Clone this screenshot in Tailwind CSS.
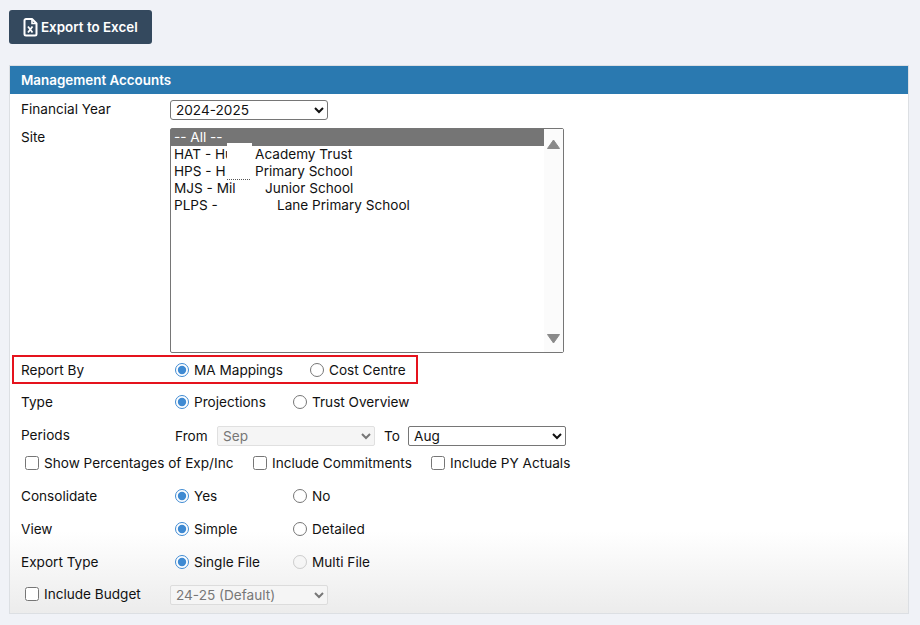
<!DOCTYPE html>
<html lang="en">
<head>
<meta charset="utf-8">
<script src="https://cdn.jsdelivr.net/npm/@tailwindcss/browser@4"></script>
<title>Management Accounts</title>
</head>
<body class="bg-[#f0f2f7] font-['Inter','Liberation_Sans',sans-serif] text-[13.6px] text-[#111] h-[625px] overflow-hidden">
<div class="pt-[10px] pl-[9px] pr-[11px]">
  <button class="h-[34px] w-[143px] rounded-[3px] bg-[#34495e] text-white font-semibold text-[13.4px] flex items-center pl-[14px] gap-[3px]">
    <svg width="15" height="19" viewBox="0 0 15 19" fill="none" stroke="#fff" stroke-width="2"><path d="M1.500 2.500a1.500 1.500 0 0 1 1.500-1.500h6l4.500 4.500v10.500a1.500 1.500 0 0 1-1.500 1.500h-9a1.500 1.500 0 0 1-1.500-1.500z" stroke-linejoin="round"/><path d="M9 1v4.500h4.500" stroke-width="1.600"/><path d="M5 8.500l4.500 6M9.500 8.500l-4.500 6" stroke-width="1.800"/></svg>
    <span class="pt-px">Export to Excel</span>
  </button>
  <div class="mt-[21px] border border-[#dcdfe3] bg-gradient-to-b from-white from-[85%] to-[#ececec]">
    <div class="h-[28px] bg-[#2a79b0] text-white font-semibold text-[13.4px] flex items-center pl-[11px]">Management Accounts</div>
    <div class="pl-[10px] pb-[3px]">
      <div class="flex items-center h-[31px]"><span class="w-[150px] pl-px -mt-[1px]">Financial Year</span><select class="w-[158px] h-[20px] border border-[#767676] rounded-[3px] bg-white pl-px text-[13.6px]"><option>2024-2025</option></select></div>
      <div class="flex items-start h-[226px] pt-[3px]">
        <span class="w-[150px] pl-px leading-[14px] pt-[2px]">Site</span>
        <div class="relative w-[394px] h-[225px] border border-[#767676] rounded-[2px] bg-white flex">
          <div class="flex-1 leading-[17px]">
            <div class="bg-[#757575] text-white pl-[3px] h-[17px]">-- All --</div>
            <div class="pl-[3px] flex"><span class="w-[81px] whitespace-nowrap">HAT - Hu</span><span>Academy Trust</span></div>
            <div class="pl-[3px] flex"><span class="w-[81px] flex items-end"><span class="whitespace-nowrap w-[53px]">HPS - H</span><span class="w-[23px] h-[4px] border-b border-dotted border-[#555]"></span></span><span>Primary School</span></div>
            <div class="pl-[3px] flex"><span class="w-[91px] whitespace-nowrap">MJS - Mil</span><span>Junior School</span></div>
            <div class="pl-[3px] flex"><span class="w-[103px] whitespace-nowrap">PLPS -</span><span>Lane Primary School</span></div>
          </div>
          <div class="w-[19px] bg-[#fbfbfb] flex flex-col justify-between items-center pt-[10px] pb-[8px]">
            <svg width="13" height="10" viewBox="0 0 13 10"><path d="M6.500 1L12.500 9.500H0.500z" fill="#8a8a8a" stroke="#8a8a8a" stroke-linejoin="round"/></svg>
            <svg width="13" height="10" viewBox="0 0 13 10"><path d="M6.500 9L12.500 0.500H0.500z" fill="#8a8a8a" stroke="#8a8a8a" stroke-linejoin="round"/></svg>
          </div>
          <div class="absolute left-[56px] top-[14px] w-[25px] h-[3px] bg-white"></div>
          <div class="absolute left-[56px] top-[17px] w-[24px] h-[17px] bg-white"></div>
        </div>
      </div>
      <div class="-ml-[8px] mt-[4px] w-[406px] h-[29px] border-2 border-[#e5131d] flex items-center pl-[6px] pt-px">
        <span class="w-[155px] pl-px">Report By</span>
        <label class="flex items-center w-[135px]"><input type="radio" name="a" checked class="w-[14px] h-[14px] m-0 mr-[5px] accent-[#3f8ad2]"><span>MA Mappings</span></label>
        <label class="flex items-center"><input type="radio" name="a" class="w-[14px] h-[14px] m-0 mr-[5px]"><span>Cost Centre</span></label>
      </div>
      <div class="flex items-center h-[33px] mt-[2px]">
        <span class="w-[155px] pl-px">Type</span>
        <label class="flex items-center w-[118px]"><input type="radio" name="b" checked class="w-[14px] h-[14px] m-0 mr-[5px] accent-[#3f8ad2]"><span>Projections</span></label>
        <label class="flex items-center"><input type="radio" name="b" class="w-[14px] h-[14px] m-0 mr-[5px]"><span>Trust Overview</span></label>
      </div>
      <div class="flex items-center h-[33px]">
        <span class="w-[155px] pl-px -mt-[1px]">Periods</span>
        <span class="w-[42px] mt-[1px]">From</span>
        <select disabled class="w-[158px] h-[20px] border border-[#e0e0e0] rounded-[2px] bg-[#f5f5f5] text-[#777] pl-px text-[13.6px] mt-[1px] opacity-100"><option>Sep</option></select>
        <span class="ml-[9px] w-[24px] mt-[1px]">To</span>
        <select class="w-[158px] h-[20px] border border-[#767676] rounded-[2px] bg-white pl-px text-[13.6px] mt-[1px]"><option>Aug</option></select>
      </div>
      <div class="flex items-center h-[23px] pl-[5px] mb-[5px]">
        <label class="flex items-center w-[228px]"><input type="checkbox" class="w-[14px] h-[14px] m-0 mr-[5px]"><span>Show Percentages of Exp/Inc</span></label>
        <label class="flex items-center w-[178px]"><input type="checkbox" class="w-[14px] h-[14px] m-0 mr-[5px]"><span>Include Commitments</span></label>
        <label class="flex items-center"><input type="checkbox" class="w-[14px] h-[14px] m-0 mr-[5px]"><span>Include PY Actuals</span></label>
      </div>
      <div class="flex items-center h-[33px]">
        <span class="w-[155px] pl-px">Consolidate</span>
        <label class="flex items-center w-[118px]"><input type="radio" name="c" checked class="w-[14px] h-[14px] m-0 mr-[5px] accent-[#3f8ad2]"><span>Yes</span></label>
        <label class="flex items-center"><input type="radio" name="c" class="w-[14px] h-[14px] m-0 mr-[5px]"><span>No</span></label>
      </div>
      <div class="flex items-center h-[33px]">
        <span class="w-[155px] pl-px">View</span>
        <label class="flex items-center w-[118px]"><input type="radio" name="d" checked class="w-[14px] h-[14px] m-0 mr-[5px] accent-[#3f8ad2]"><span>Simple</span></label>
        <label class="flex items-center"><input type="radio" name="d" class="w-[14px] h-[14px] m-0 mr-[5px]"><span>Detailed</span></label>
      </div>
      <div class="flex items-center h-[33px]">
        <span class="w-[155px] pl-px">Export Type</span>
        <label class="flex items-center w-[118px]"><input type="radio" name="e" checked class="w-[14px] h-[14px] m-0 mr-[5px] accent-[#3f8ad2]"><span>Single File</span></label>
        <label class="flex items-center"><input type="radio" name="e" disabled class="w-[14px] h-[14px] m-0 mr-[5px]"><span>Multi File</span></label>
      </div>
      <div class="flex items-center h-[31px]">
        <label class="flex items-center w-[150px] pl-[5px]"><input type="checkbox" class="w-[14px] h-[14px] m-0 mr-[5px]"><span>Include Budget</span></label>
        <select disabled class="w-[158px] h-[20px] border border-[#dcdcdc] rounded-[2px] bg-[#f5f5f5] text-[#777] pl-px text-[13.6px] opacity-100"><option>24-25 (Default)</option></select>
      </div>
    </div>
  </div>
</div>
</body>
</html>
